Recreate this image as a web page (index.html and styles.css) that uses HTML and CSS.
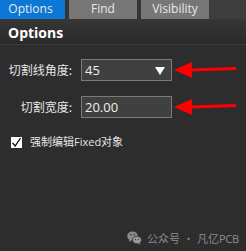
FILE: index.html
```html
<!DOCTYPE html>
<html>
<head>
<meta charset="utf-8">
<link rel="stylesheet" href="styles.css">
</head>
<body>
<div class="panel">
  <div class="tabs">
    <div class="tab active">Options</div>
    <div class="tab">Find</div>
    <div class="tab">Visibility</div>
    <div class="tab-fill"></div>
  </div>
  <div class="header">Options</div>
  <div class="body">
    <div class="form">
      <label class="label">切割线角度:</label>
      <div class="field select"><span>45</span><svg class="caret" width="10" height="8" viewBox="0 0 10 8"><polygon points="0,0 10,0 5,8" fill="#ffffff"/></svg></div>
      <svg class="arrow" width="64" height="18" viewBox="0 0 64 18"><polygon points="0,9 18,1 18,17" fill="#ff0000"/><polygon points="17,7.5 62,6 62,9 17,10.5" fill="#ff0000"/></svg>
      <label class="label">切割宽度:</label>
      <div class="field"><span>20.00</span></div>
      <svg class="arrow" width="64" height="18" viewBox="0 0 64 18"><polygon points="0,9 18,1 18,17" fill="#ff0000"/><polygon points="17,7.5 62,6 62,9 17,10.5" fill="#ff0000"/></svg>
    </div>
    <div class="check-row">
      <span class="checkbox"><svg width="11" height="11" viewBox="0 0 11 11"><path d="M1.5 5.8 L4.2 9 L9.5 1" fill="none" stroke="#000" stroke-width="1.3"/></svg></span>
      <span class="check-label">强制编辑Fixed对象</span>
    </div>
    <div class="spacer"></div>
    <div class="watermark">
      <svg class="wx" width="15" height="14" viewBox="0 0 15 14"><ellipse cx="5.5" cy="5" rx="5.3" ry="4.5" fill="#8a8a8a"/><path d="M2.5 8.5 L2 11 L4.5 9.5 Z" fill="#8a8a8a"/><ellipse cx="10" cy="9" rx="4.5" ry="3.8" fill="#9a9a9a" stroke="#2d2d2d" stroke-width="0.8"/><path d="M12.5 12 L13.5 13.8 L11 12.6 Z" fill="#9a9a9a"/><circle cx="3.8" cy="3.8" r="0.8" fill="#2d2d2d"/><circle cx="7.2" cy="3.8" r="0.8" fill="#2d2d2d"/><circle cx="8.6" cy="8.3" r="0.6" fill="#2d2d2d"/><circle cx="11.4" cy="8.3" r="0.6" fill="#2d2d2d"/></svg>
      <span class="wm-text">公众号<span class="dot">·</span>凡亿<span class="pcb">PCB</span></span>
    </div>
  </div>
</div>
</body>
</html>
```

FILE: styles.css
```css
html, body {
  margin: 0;
  padding: 0;
  background: #2d2d2d;
}
body {
  width: 246px;
  height: 251px;
  overflow: hidden;
  font-family: "Open Sans", "Noto Sans CJK SC", sans-serif;
  color: #e6e6e6;
}
.panel {
  display: flex;
  flex-direction: column;
  height: 251px;
}
.tabs {
  display: flex;
  height: 19px;
  background: #3d3d3d;
}
.tab {
  height: 19px;
  line-height: 18px;
  font-size: 12px;
  text-align: center;
  color: #e8e8e8;
  background: #777777;
  box-sizing: border-box;
}
.tab:nth-child(1) {
  background: #0a78d4;
  border-right: 4px solid #353535;
  width: 69px;
  padding-right: 4px;
}
.tab:nth-child(2) {
  border-right: 4px solid #353535;
  width: 72px;
}
.tab:nth-child(3) {
  width: 68px;
}
.tab-fill {
  flex: 1;
}
.header {
  height: 26px;
  box-sizing: border-box;
  padding: 4px 0 0 8px;
  font-size: 14px;
  font-weight: bold;
  color: #ffffff;
  background: linear-gradient(#363636, #2a2a2a);
  border-bottom: 1px solid #3c3c3c;
  line-height: 20px;
}
.body {
  flex: 1;
  display: flex;
  flex-direction: column;
  padding-top: 14px;
}
.form {
  display: grid;
  grid-template-columns: 72px 91px 64px;
  column-gap: 9px;
  row-gap: 15px;
  align-items: center;
}
.label {
  font-family: "Noto Sans CJK SC", sans-serif;
  font-size: 12px;
  text-align: right;
  color: #e6e6e6;
  line-height: 16px;
}
.field {
  height: 22px;
  box-sizing: border-box;
  border: 1px solid #7a7a7a;
  background: #404040;
  display: flex;
  align-items: center;
  justify-content: space-between;
  padding: 0 6px 0 3px;
  font-size: 13px;
  color: #f0f0f0;
}
.caret {
  margin-top: 1px;
}
.arrow {
  margin-left: -7px;
}
.check-row {
  display: flex;
  align-items: center;
  gap: 8px;
  margin-top: 17px;
  padding-left: 11px;
}
.checkbox {
  width: 11px;
  height: 11px;
  background: #ffffff;
  display: flex;
}
.check-label {
  font-family: "Open Sans", "Noto Sans CJK SC", sans-serif;
  font-size: 11px;
  color: #e6e6e6;
  line-height: 14px;
}
.spacer {
  flex: 1;
}
.watermark {
  display: flex;
  align-items: center;
  gap: 5px;
  padding-left: 127px;
  margin-bottom: 5px;
  white-space: nowrap;
  font-family: "Noto Sans CJK SC", sans-serif;
  font-size: 11px;
  color: #8c8c8c;
}
.wx {
  flex: none;
}
.dot {
  margin: 0 3px;
}
.pcb {
  font-family: "Open Sans", sans-serif;
  font-size: 11px;
  letter-spacing: -0.3px;
}
```
